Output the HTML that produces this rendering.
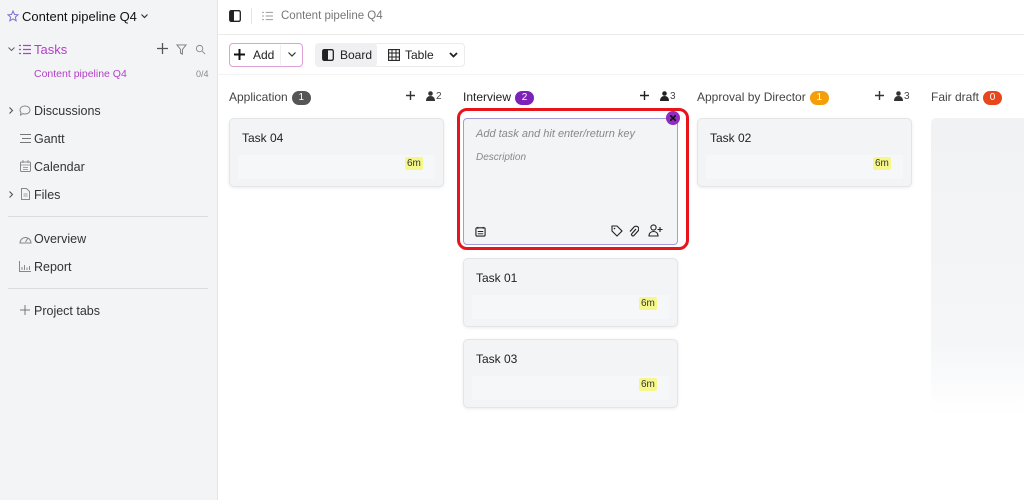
<!DOCTYPE html>
<html><head><meta charset="utf-8"><style>
*{box-sizing:border-box;margin:0;padding:0}
body{width:1024px;height:500px;overflow:hidden;font-family:"Liberation Sans",sans-serif;background:#fff;position:relative;color:#222}
.sb{position:absolute;left:0;top:0;width:218px;height:500px;background:#f3f4f6;border-right:1px solid #e3e4e8}
.a{position:absolute;white-space:nowrap}
.nav{font-size:12.5px;color:#333}
.hr{position:absolute;left:8px;width:200px;height:1px;background:#dcdde1}
.ic{position:absolute}
.card{position:absolute;background:#f3f4f6;border:1px solid #e4e5e8;border-radius:5px;box-shadow:0 1px 3px rgba(0,0,0,.08)}
.card .t{position:absolute;left:12px;top:12px;font-size:12px;color:#222}
.card .row{position:absolute;left:8px;right:8px;top:36px;height:24px;background:#f6f7f9}
.bd{position:absolute;background:#f5f78a;font-size:10px;padding:1px 2px;border-radius:2px;color:#333}
.pill{display:inline-block;color:#fff;font-size:10px;border-radius:8px;padding:1px 6px;margin-left:4px;vertical-align:1px;line-height:12px;min-width:19px;text-align:center}
.ch{font-size:12px;color:#444}
.cnt{font-size:10px;color:#444}
</style></head><body>
<div class="sb">
<svg class="ic" style="left:7px;top:10px" width="12" height="12" viewBox="0 0 24 24"><path d="M12 2l3 7 7 .6-5.3 4.7 1.6 7.2L12 17.8 5.7 21.5l1.6-7.2L2 9.6 9 9z" fill="none" stroke="#7c6fd0" stroke-width="2"/></svg>
<div class="a" style="left:22px;top:9px;font-size:13px;color:#111">Content pipeline Q4</div>
<svg class="ic" style="left:141px;top:14px" width="7" height="5" viewBox="0 0 7 5"><path d="M.5 .5l3 3 3-3" fill="none" stroke="#333" stroke-width="1.2"/></svg>
<svg class="ic" style="left:8px;top:47px" width="7" height="5" viewBox="0 0 7 5"><path d="M.5 .5l3 3 3-3" fill="none" stroke="#666" stroke-width="1.1"/></svg>
<svg class="ic" style="left:19px;top:44px" width="12" height="11" viewBox="0 0 12 11"><path d="M4 1.5h8M4 5.5h8M4 9.5h8M0 1.5h2M0 5.5h2M0 9.5h2" stroke="#b340c8" stroke-width="1.2"/></svg>
<div class="a" style="left:34px;top:42px;font-size:13px;color:#b340c8">Tasks</div>
<svg class="ic" style="left:157px;top:43px" width="11" height="11" viewBox="0 0 11 11"><path d="M5.5 0v11M0 5.5h11" stroke="#555" stroke-width="1.3"/></svg>
<svg class="ic" style="left:176px;top:44px" width="11" height="11" viewBox="0 0 12 12"><path d="M1 1h10L7 6v5L5 10V6z" fill="none" stroke="#777"/></svg>
<svg class="ic" style="left:195px;top:44px" width="11" height="11" viewBox="0 0 12 12"><circle cx="5" cy="5" r="3.5" fill="none" stroke="#888"/><path d="M8 8l3 3" stroke="#888"/></svg>
<div class="a" style="left:34px;top:68px;font-size:10.5px;color:#b340c8">Content pipeline Q4</div>
<div class="a" style="left:196px;top:69px;font-size:9px;color:#888">0/4</div>
<svg class="ic" style="left:9px;top:107px" width="5" height="7" viewBox="0 0 5 7"><path d="M.5 .5l3 3-3 3" fill="none" stroke="#555" stroke-width="1.1"/></svg>
<svg class="ic" style="left:19px;top:105px" width="12" height="11" viewBox="0 0 12 11"><path d="M6 1C3 1 1 2.8 1 5c0 1 .4 1.8 1 2.4L1.5 10 4 8.6c.6.2 1.3.4 2 .4 3 0 5-1.8 5-4S9 1 6 1z" fill="none" stroke="#888"/></svg>
<div class="a nav" style="left:34px;top:104px">Discussions</div>
<svg class="ic" style="left:20px;top:134px" width="11" height="9" viewBox="0 0 11 9"><path d="M0 .5h11M2 4.5h9M0 8.5h11" stroke="#777"/></svg>
<div class="a nav" style="left:34px;top:132px">Gantt</div>
<svg class="ic" style="left:20px;top:160px" width="11" height="12" viewBox="0 0 11 12"><rect x=".5" y="2" width="10" height="9.5" rx="1" fill="none" stroke="#888"/><path d="M3 0v3M8 0v3M.5 5h10M3 7.5h5M3 9.5h5" stroke="#888" stroke-width=".8"/></svg>
<div class="a nav" style="left:34px;top:160px">Calendar</div>
<svg class="ic" style="left:9px;top:191px" width="5" height="7" viewBox="0 0 5 7"><path d="M.5 .5l3 3-3 3" fill="none" stroke="#555" stroke-width="1.1"/></svg>
<svg class="ic" style="left:21px;top:188px" width="9" height="12" viewBox="0 0 9 12"><path d="M.5 .5h5l3 3v8h-8z" fill="none" stroke="#888"/><path d="M2.5 8h4M2.5 6h4" stroke="#888" stroke-width=".7"/></svg>
<div class="a nav" style="left:34px;top:188px">Files</div>
<div class="hr" style="top:216px"></div>
<svg class="ic" style="left:19px;top:233px" width="13" height="11" viewBox="0 0 13 11"><path d="M1 10a5.5 5.5 0 1 1 11 0z" fill="none" stroke="#888"/><path d="M6.5 9l2.5-4" stroke="#888"/></svg>
<div class="a nav" style="left:34px;top:232px">Overview</div>
<svg class="ic" style="left:19px;top:261px" width="12" height="11" viewBox="0 0 12 11"><path d="M.5 0v10.5H12M3 9V6M5.5 9V4M8 9V6.5M10.5 9V5" fill="none" stroke="#888"/></svg>
<div class="a nav" style="left:34px;top:260px">Report</div>
<div class="hr" style="top:288px"></div>
<svg class="ic" style="left:20px;top:305px" width="10" height="10" viewBox="0 0 10 10"><path d="M5 0v10M0 5h10" stroke="#777"/></svg>
<div class="a nav" style="left:34px;top:304px">Project tabs</div>
</div>
<!-- header -->
<svg class="ic" style="left:229px;top:10px" width="12" height="12" viewBox="0 0 12 12"><rect x=".7" y=".7" width="10.6" height="10.6" rx="1.5" fill="none" stroke="#222" stroke-width="1.3"/><rect x="1" y="1" width="4" height="10" fill="#222"/></svg>
<div class="a" style="left:251px;top:8px;width:1px;height:16px;background:#e3e3e3"></div>
<svg class="ic" style="left:262px;top:11px" width="11" height="10" viewBox="0 0 12 11"><path d="M4 1.5h8M4 5.5h8M4 9.5h8M0 1.5h2M0 5.5h2M0 9.5h2" stroke="#999" stroke-width="1.1"/></svg>
<div class="a" style="left:281px;top:10px;font-size:11.5px;color:#777">Content pipeline Q4</div>
<div class="a" style="left:218px;top:34px;width:806px;height:1px;background:#ececec"></div>
<!-- toolbar -->
<div class="a" style="left:229px;top:43px;width:74px;height:24px;border:1px solid #e0a0d8;border-radius:4px;background:#fff"></div>
<svg class="ic" style="left:234px;top:49px" width="11" height="11" viewBox="0 0 11 11"><path d="M5.5 0v11M0 5.5h11" stroke="#111" stroke-width="2"/></svg>
<div class="a" style="left:253px;top:48px;font-size:12px;color:#222">Add</div>
<div class="a" style="left:280px;top:45px;width:1px;height:20px;background:#eee"></div>
<svg class="ic" style="left:288px;top:52px" width="8" height="5" viewBox="0 0 8 5"><path d="M.5 .5l3.5 3.5 3.5-3.5" fill="none" stroke="#333" stroke-width="1.2"/></svg>
<div class="a" style="left:315px;top:43px;width:150px;height:24px;border:1px solid #ececec;border-radius:4px;background:#fff"></div>
<div class="a" style="left:315px;top:43px;width:62px;height:24px;background:#f0f0f2;border-radius:4px"></div>
<svg class="ic" style="left:322px;top:49px" width="12" height="12" viewBox="0 0 12 12"><rect x=".7" y=".7" width="10.6" height="10.6" rx="1.5" fill="none" stroke="#222" stroke-width="1.3"/><rect x="1" y="1" width="5" height="10" fill="#222"/></svg>
<div class="a" style="left:340px;top:48px;font-size:12px;color:#222">Board</div>
<svg class="ic" style="left:388px;top:49px" width="12" height="12" viewBox="0 0 12 12"><rect x=".6" y=".6" width="10.8" height="10.8" fill="none" stroke="#222" stroke-width="1.1"/><path d="M0 4h12M0 8h12M4 0v12M8 0v12" stroke="#222" stroke-width="1"/></svg>
<div class="a" style="left:405px;top:48px;font-size:12px;color:#222">Table</div>
<svg class="ic" style="left:449px;top:52px" width="9" height="6" viewBox="0 0 9 6"><path d="M1 1l3.5 3.5L8 1" fill="none" stroke="#222" stroke-width="1.8"/></svg>
<div class="a" style="left:218px;top:74px;width:806px;height:1px;background:#f3f3f3"></div>
<!-- column headers -->
<div class="a ch" style="left:229px;top:90px">Application<span class="pill" style="background:#555">1</span></div>
<svg class="ic" style="left:406px;top:91px" width="9" height="9" viewBox="0 0 9 9"><path d="M4.5 0v9M0 4.5h9" stroke="#333" stroke-width="1.4"/></svg>
<svg class="ic" style="left:426px;top:91px" width="9" height="10" viewBox="0 0 9 10"><circle cx="4.5" cy="2.5" r="2.3" fill="#333"/><path d="M0 10c0-3.5 2-5 4.5-5S9 6.5 9 10z" fill="#333"/></svg>
<div class="a cnt" style="left:436px;top:91px">2</div>
<div class="a ch" style="left:463px;top:90px;color:#222">Interview<span class="pill" style="background:#7d22b8">2</span></div>
<svg class="ic" style="left:640px;top:91px" width="9" height="9" viewBox="0 0 9 9"><path d="M4.5 0v9M0 4.5h9" stroke="#222" stroke-width="1.4"/></svg>
<svg class="ic" style="left:660px;top:91px" width="9" height="10" viewBox="0 0 9 10"><circle cx="4.5" cy="2.5" r="2.3" fill="#222"/><path d="M0 10c0-3.5 2-5 4.5-5S9 6.5 9 10z" fill="#222"/></svg>
<div class="a cnt" style="left:670px;top:91px">3</div>
<div class="a ch" style="left:697px;top:90px">Approval by Director<span class="pill" style="background:#f59e0b">1</span></div>
<svg class="ic" style="left:875px;top:91px" width="9" height="9" viewBox="0 0 9 9"><path d="M4.5 0v9M0 4.5h9" stroke="#333" stroke-width="1.4"/></svg>
<svg class="ic" style="left:894px;top:91px" width="9" height="10" viewBox="0 0 9 10"><circle cx="4.5" cy="2.5" r="2.3" fill="#333"/><path d="M0 10c0-3.5 2-5 4.5-5S9 6.5 9 10z" fill="#333"/></svg>
<div class="a cnt" style="left:904px;top:91px">3</div>
<div class="a ch" style="left:931px;top:90px">Fair draft<span class="pill" style="background:#e8471c">0</span></div>
<!-- cards -->
<div class="card" style="left:229px;top:118px;width:215px;height:69px"><div class="t">Task 04</div><div class="row"></div><div class="bd" style="left:175px;top:38px">6m</div></div>
<div class="card" style="left:697px;top:118px;width:215px;height:69px"><div class="t">Task 02</div><div class="row"></div><div class="bd" style="left:175px;top:38px">6m</div></div>
<div class="card" style="left:463px;top:258px;width:215px;height:69px"><div class="t">Task 01</div><div class="row"></div><div class="bd" style="left:175px;top:38px">6m</div></div>
<div class="card" style="left:463px;top:339px;width:215px;height:69px"><div class="t">Task 03</div><div class="row"></div><div class="bd" style="left:175px;top:38px">6m</div></div>
<div class="a" style="left:931px;top:118px;width:93px;height:297px;background:linear-gradient(#f0f2f4,#f5f6f8 75%,#fff);border-radius:5px 0 0 5px"></div>
<!-- editor -->
<div class="a" style="left:457px;top:108px;width:232px;height:142px;border:3px solid #e8141c;border-radius:10px"></div>
<div class="a" style="left:463px;top:118px;width:215px;height:127px;background:#f3f4f6;border:1px solid #a69ad8;border-radius:4px"></div>
<div class="a" style="left:476px;top:128px;font-size:11px;font-style:italic;color:#888">Add task and hit enter/return key</div>
<div class="a" style="left:476px;top:152px;font-size:10px;font-style:italic;color:#888">Description</div>
<div class="a" style="left:666px;top:111px;width:14px;height:14px;border-radius:50%;background:#8e2bc0"></div>
<svg class="ic" style="left:670px;top:115px" width="6" height="6" viewBox="0 0 6 6"><path d="M0 0l6 6M6 0L0 6" stroke="#111" stroke-width="1.6"/></svg>
<svg class="ic" style="left:475px;top:226px" width="11" height="11" viewBox="0 0 12 12"><rect x="1" y="2" width="10" height="9" rx="1" fill="none" stroke="#222" stroke-width="1.2"/><path d="M3 1v2M9 1v2M3 6h6M3 8.5h6" stroke="#222"/></svg>
<svg class="ic" style="left:611px;top:225px" width="12" height="12" viewBox="0 0 12 12"><path d="M1 1h5l5 5-5 5-5-5z" fill="none" stroke="#222" stroke-width="1.1"/><circle cx="3.5" cy="3.5" r=".8" fill="#222"/></svg>
<svg class="ic" style="left:628px;top:225px" width="11" height="12" viewBox="0 0 11 12"><path d="M8 4L4 8.5a1.3 1.3 0 0 0 2 2L10 6a2.6 2.6 0 0 0-4-4L2 6.5" fill="none" stroke="#222" stroke-width="1.2"/></svg>
<svg class="ic" style="left:648px;top:224px" width="15" height="13" viewBox="0 0 15 13"><circle cx="5.5" cy="3.5" r="2.6" fill="none" stroke="#222" stroke-width="1.1"/><path d="M1 12c0-3 2-4.5 4.5-4.5S10 9 10 12z" fill="none" stroke="#222" stroke-width="1.1"/><path d="M12 3v5M9.5 5.5h5" stroke="#222" stroke-width="1.1"/></svg>
</body></html>
